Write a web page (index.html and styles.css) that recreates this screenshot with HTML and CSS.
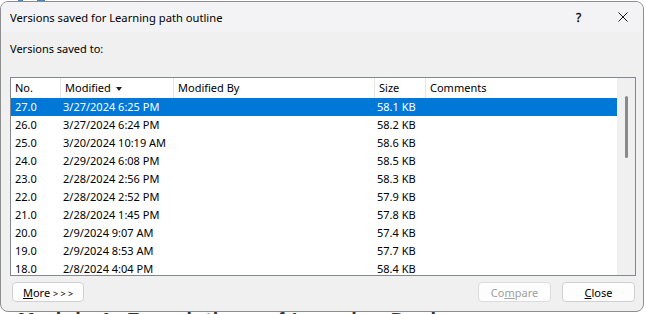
FILE: index.html
```html
<!DOCTYPE html>
<html lang="en">

<head>
    <meta charset="UTF-8">
    <meta name="viewport" content="width=device-width, initial-scale=1.0">
    <title>Versions saved for Learning path outline</title>
    <link rel="stylesheet" href="styles.css">
</head>

<body>
    <div class="backdrop-icons">
        <span class="icon-bit"></span>
        <span class="icon-bit wide"></span>
    </div>
    <div class="dialog">
        <div class="titlebar">
            <div class="title">Versions saved for Learning path outline</div>
            <div class="help">?</div>
            <svg class="close-x" width="10" height="10" viewBox="0 0 10 10">
                <path d="M0.5 0.5 L9.5 9.5 M9.5 0.5 L0.5 9.5" stroke="#1a1a1a" stroke-width="1" fill="none" />
            </svg>
        </div>
        <div class="content">
            <div class="label">Versions saved to:</div>
            <div class="list">
                <div class="grid">
                    <div class="row header">
                        <div class="cell col-no">No.</div>
                        <div class="cell col-mod">Modified <span class="sort-arrow"></span></div>
                        <div class="cell col-by">Modified By</div>
                        <div class="cell col-size">Size</div>
                        <div class="cell col-comments">Comments</div>
                    </div>
                    <div class="row selected">
                        <div class="cell col-no">27.0</div>
                        <div class="cell col-mod">3/27/2024 6:25 PM</div>
                        <div class="cell col-by"></div>
                        <div class="cell col-size">58.1 KB</div>
                        <div class="cell col-comments"></div>
                    </div>
                    <div class="row">
                        <div class="cell col-no">26.0</div>
                        <div class="cell col-mod">3/27/2024 6:24 PM</div>
                        <div class="cell col-by"></div>
                        <div class="cell col-size">58.2 KB</div>
                        <div class="cell col-comments"></div>
                    </div>
                    <div class="row">
                        <div class="cell col-no">25.0</div>
                        <div class="cell col-mod">3/20/2024 10:19 AM</div>
                        <div class="cell col-by"></div>
                        <div class="cell col-size">58.6 KB</div>
                        <div class="cell col-comments"></div>
                    </div>
                    <div class="row">
                        <div class="cell col-no">24.0</div>
                        <div class="cell col-mod">2/29/2024 6:08 PM</div>
                        <div class="cell col-by"></div>
                        <div class="cell col-size">58.5 KB</div>
                        <div class="cell col-comments"></div>
                    </div>
                    <div class="row">
                        <div class="cell col-no">23.0</div>
                        <div class="cell col-mod">2/28/2024 2:56 PM</div>
                        <div class="cell col-by"></div>
                        <div class="cell col-size">58.3 KB</div>
                        <div class="cell col-comments"></div>
                    </div>
                    <div class="row">
                        <div class="cell col-no">22.0</div>
                        <div class="cell col-mod">2/28/2024 2:52 PM</div>
                        <div class="cell col-by"></div>
                        <div class="cell col-size">57.9 KB</div>
                        <div class="cell col-comments"></div>
                    </div>
                    <div class="row">
                        <div class="cell col-no">21.0</div>
                        <div class="cell col-mod">2/28/2024 1:45 PM</div>
                        <div class="cell col-by"></div>
                        <div class="cell col-size">57.8 KB</div>
                        <div class="cell col-comments"></div>
                    </div>
                    <div class="row">
                        <div class="cell col-no">20.0</div>
                        <div class="cell col-mod">2/9/2024 9:07 AM</div>
                        <div class="cell col-by"></div>
                        <div class="cell col-size">57.4 KB</div>
                        <div class="cell col-comments"></div>
                    </div>
                    <div class="row">
                        <div class="cell col-no">19.0</div>
                        <div class="cell col-mod">2/9/2024 8:53 AM</div>
                        <div class="cell col-by"></div>
                        <div class="cell col-size">57.7 KB</div>
                        <div class="cell col-comments"></div>
                    </div>
                    <div class="row">
                        <div class="cell col-no">18.0</div>
                        <div class="cell col-mod">2/8/2024 4:04 PM</div>
                        <div class="cell col-by"></div>
                        <div class="cell col-size">58.4 KB</div>
                        <div class="cell col-comments"></div>
                    </div>
                </div>
                <div class="scrollbar">
                    <div class="thumb"></div>
                </div>
            </div>
            <div class="buttons">
                <button class="btn btn-more"><u>M</u>ore <span class="arrows">&gt; &gt; &gt;</span></button>
                <div class="spacer"></div>
                <button class="btn" disabled>Co<u>m</u>pare</button>
                <button class="btn"><u>C</u>lose</button>
            </div>
        </div>
    </div>
    <div class="behind">Module 1: Foundations of Learning Design</div>
</body>

</html>
```

FILE: styles.css
```css
body {
    margin: 0;
    width: 646px;
    height: 314px;
    overflow: hidden;
    background: #fff;
    font-family: "Noto Sans", "Open Sans", sans-serif;
    font-size: 11px;
    color: #000;
}

/* bits of the ribbon icons peeking out above the dialog */
.backdrop-icons {
    height: 1px;
    display: flex;
    gap: 14px;
    padding-left: 18px;
}

.icon-bit {
    width: 5px;
    height: 1px;
    background: #3b86d4;
}

.icon-bit.wide {
    width: 8px;
}

.dialog {
    width: 644px;
    height: 311px;
    box-sizing: border-box;
    border: 1px solid #8e8e8e;
    border-radius: 8px;
    background: #f0f0f0;
    overflow: hidden;
    display: flex;
    flex-direction: column;
}

.titlebar {
    height: 30px;
    flex-shrink: 0;
    display: flex;
    align-items: center;
    background: #f3f3f5;
    padding-left: 9px;
}

.title {
    flex: 1;
    font-size: 11.2px;
}

.help {
    font-size: 12px;
    width: 10px;
    margin-right: 32px;
    -webkit-text-stroke: 0.3px #000;
}

.close-x {
    margin-right: 15px;
}

.content {
    flex: 1;
    padding: 9px 7px 0 9px;
    display: flex;
    flex-direction: column;
}

.label {
    line-height: 16px;
    margin-bottom: 20px;
}

.list {
    height: 199px;
    box-sizing: border-box;
    border: 1px solid #828790;
    background: #fff;
    display: flex;
    overflow: hidden;
}

.grid {
    flex: 1;
    overflow: hidden;
}

.row {
    display: flex;
    height: 18px;
    line-height: 18px;
    white-space: nowrap;
}

.row.header {
    height: 20px;
    line-height: 20px;
}

.row.selected {
    background: #0078d7;
    color: #fff;
}

.cell {
    box-sizing: border-box;
    padding-left: 2px;
    overflow: hidden;
}

.header .cell {
    padding-left: 4px;
    border-right: 1px solid #e5e5e5;
}

.header .col-comments {
    border-right: none;
}

.col-no {
    width: 50px;
    padding-left: 4px;
}

.col-mod {
    width: 113px;
}

.col-by {
    width: 201px;
}

.col-size {
    width: 51px;
}

.col-comments {
    flex: 1;
}

.sort-arrow {
    display: inline-block;
    width: 0;
    height: 0;
    margin-left: 2px;
    vertical-align: 1px;
    border-left: 3px solid transparent;
    border-right: 3px solid transparent;
    border-top: 4px solid #222;
}

.scrollbar {
    width: 18px;
    background: #f0f0f0;
    padding: 18px 0 0 8px;
    box-sizing: border-box;
}

.thumb {
    width: 3px;
    height: 62px;
    border-radius: 2px;
    background: #8a8a8a;
}

.buttons {
    display: flex;
    gap: 11px;
    margin-top: 6px;
    padding: 0 1px 0 2px;
}

.spacer {
    flex: 1;
}

.btn {
    width: 73px;
    height: 20px;
    padding: 0;
    border: 1px solid #d0d0d0;
    border-radius: 4px;
    background: #fdfdfd;
    font-family: "Noto Sans", "Open Sans", sans-serif;
    font-size: 11px;
    color: #000;
}

.btn-more {
    width: 72px;
}

.btn:disabled {
    color: #a0a0a0;
    border-color: #dcdcdc;
}

.arrows {
    font-size: 9px;
}

/* page text behind the dialog, only its top edge shows */
.behind {
    font-family: "Liberation Sans", sans-serif;
    font-weight: bold;
    font-size: 20px;
    line-height: 16px;
    padding-left: 18px;
    color: #333;
    letter-spacing: 1px;
}
```
